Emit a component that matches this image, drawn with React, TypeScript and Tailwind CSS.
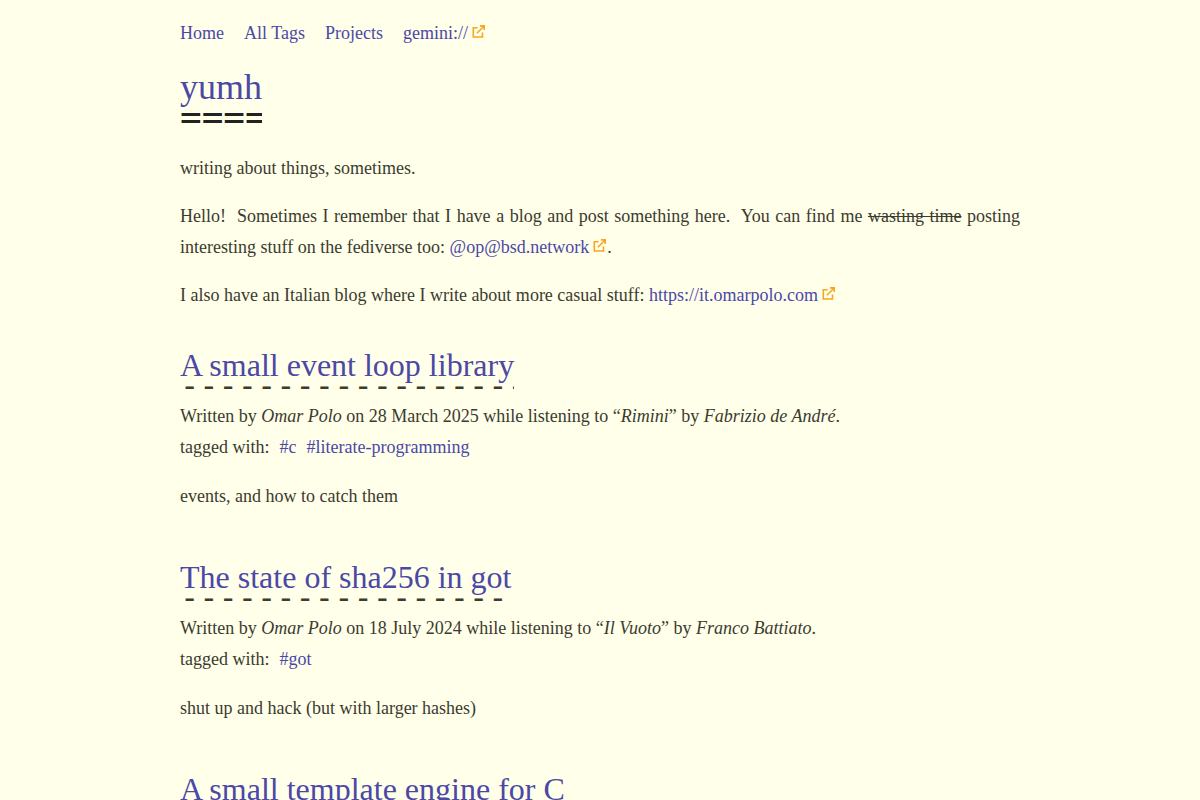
import type { ReactNode } from "react";

type Post = {
    title: string;
    date: string;
    song: string;
    artist: string;
    tags: string[];
    summary: string;
};

const posts: Post[] = [
    {
        title: "A small event loop library",
        date: "28 March 2025",
        song: "Rimini",
        artist: "Fabrizio de André",
        tags: ["c", "literate-programming"],
        summary: "events, and how to catch them",
    },
    {
        title: "The state of sha256 in got",
        date: "18 July 2024",
        song: "Il Vuoto",
        artist: "Franco Battiato",
        tags: ["got"],
        summary: "shut up and hack (but with larger hashes)",
    },
];

function ExternalLink({ href, children }: { href: string; children: ReactNode }) {
    return (
        <a href={href} className="whitespace-nowrap text-[#4c48a6] hover:underline">
            {children}
            <svg
                viewBox="0 0 13 13"
                className="ml-1 mr-px inline-block size-[13px] align-[1px]"
                fill="none"
                stroke="#fba41f"
                strokeWidth="1.6"
                aria-hidden="true"
            >
                <path d="M5.6 2.8H1.3v9.2h9.2V7.6" />
                <path d="M8 .9h4.2v4.2M12.1 1 4.9 8.2" />
            </svg>
        </a>
    );
}

function PostTitle({ title }: { title: string }) {
    return (
        <h2 className="relative w-fit text-[32px] leading-[54px]">
            <a href="#" className="text-[#4c48a6]">{title}</a>
            {/* Dashed rule, cut off where the title ends */}
            <span
                aria-hidden="true"
                className="pointer-events-none absolute inset-x-0 top-[21px] overflow-hidden font-['DejaVu_Sans_Mono',monospace] whitespace-nowrap select-none"
            >
                {"-".repeat(40)}
            </span>
        </h2>
    );
}

export default function App() {
    return (
        <div className="min-h-screen bg-[#ffffea] px-5 font-['Liberation_Serif',serif] text-lg leading-[31px] text-[#3b3b2f]">
            <div className="mx-auto max-w-[840px] pt-[18px]">
                <nav className="flex gap-5">
                    <a href="#" className="text-[#4c48a6] hover:underline">Home</a>
                    <a href="#" className="text-[#4c48a6] hover:underline">All Tags</a>
                    <a href="#" className="text-[#4c48a6] hover:underline">Projects</a>
                    <ExternalLink href="#">gemini://</ExternalLink>
                </nav>

                <header className="pt-2">
                    <h1 className="relative w-fit text-4xl leading-[61px]">
                        <a href="#" className="text-[#4c48a6]">yumh</a>
                        <span
                            aria-hidden="true"
                            className="pointer-events-none absolute inset-x-0 top-[29px] overflow-hidden font-['DejaVu_Sans_Mono',monospace] text-[#222] select-none"
                        >
                            ====
                        </span>
                    </h1>
                    <p className="mt-[35px]">writing about things, sometimes.</p>
                </header>

                <main>
                    <p className="mt-[17px] text-justify">
                        Hello!&nbsp; Sometimes I remember that I have a blog and post something here.&nbsp; You can
                        find me <del>wasting time</del> posting interesting stuff on the fediverse
                        too: <ExternalLink href="#">@op@bsd.network</ExternalLink>.
                    </p>
                    <p className="mt-[17px]">
                        I also have an Italian blog where I write about more casual
                        stuff: <ExternalLink href="#">https://it.omarpolo.com</ExternalLink>
                    </p>

                    {posts.map((post) => (
                        <article key={post.title} className="mt-[27px] mb-[38px]">
                            <PostTitle title={post.title} />
                            <p className="mt-[9px]">
                                Written by <em>Omar Polo</em> on {post.date} while listening to “<em>{post.song}</em>”
                                by <em>{post.artist}</em>.
                            </p>
                            <ul className="flex gap-2.5">
                                <li>tagged with:</li>
                                {post.tags.map((tag) => (
                                    <li key={tag}>
                                        <a href="#" className="text-[#4c48a6] hover:underline">#{tag}</a>
                                    </li>
                                ))}
                            </ul>
                            <p className="mt-[18px]">{post.summary}</p>
                        </article>
                    ))}

                    <article>
                        <PostTitle title="A small template engine for C" />
                    </article>
                </main>
            </div>
        </div>
    );
}
